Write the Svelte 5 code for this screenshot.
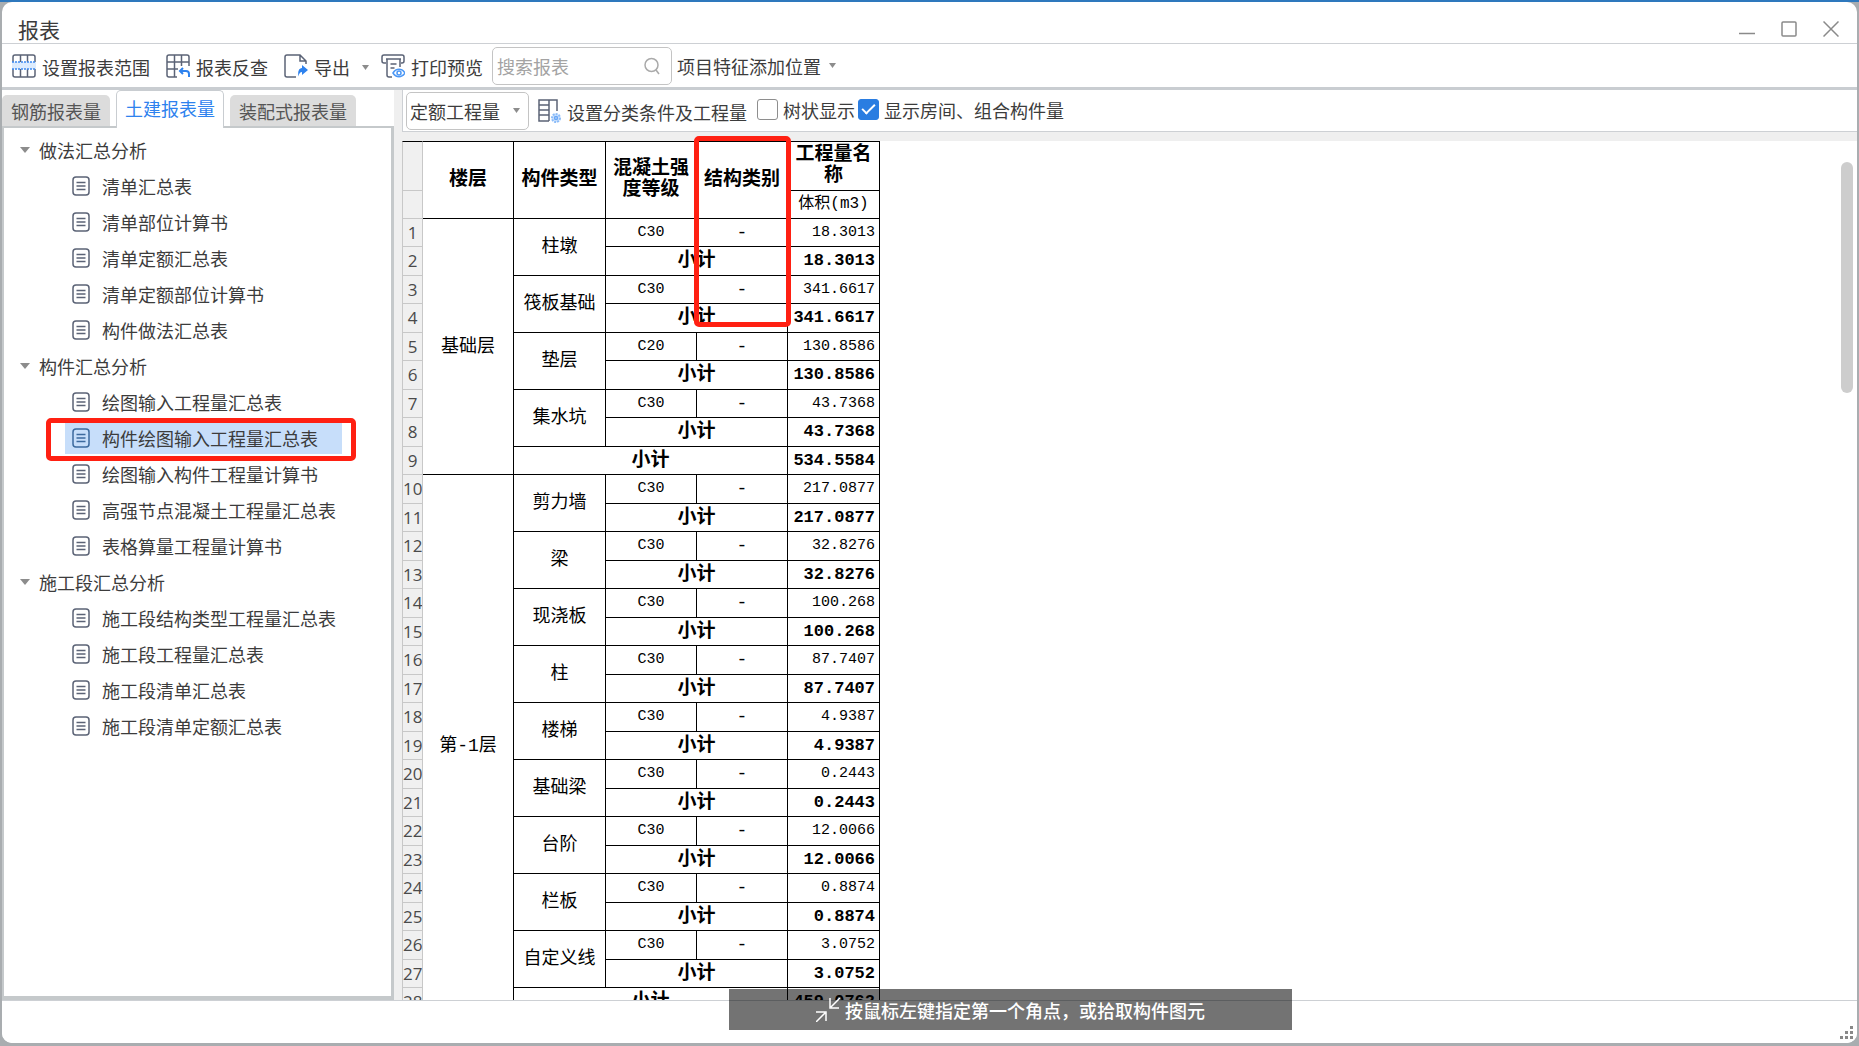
<script>
  let tabs = ["钢筋报表量", "土建报表量", "装配式报表量"];
  let activeTab = "土建报表量";
  let selected = "构件绘图输入工程量汇总表";
  let search = "";
  let treeView = false;
  let showRooms = true;

  const groups = [
    {
      name: "做法汇总分析",
      items: ["清单汇总表", "清单部位计算书", "清单定额汇总表", "清单定额部位计算书", "构件做法汇总表"],
    },
    {
      name: "构件汇总分析",
      items: [
        "绘图输入工程量汇总表",
        "构件绘图输入工程量汇总表",
        "绘图输入构件工程量计算书",
        "高强节点混凝土工程量汇总表",
        "表格算量工程量计算书",
      ],
    },
    {
      name: "施工段汇总分析",
      items: ["施工段结构类型工程量汇总表", "施工段工程量汇总表", "施工段清单汇总表", "施工段清单定额汇总表"],
    },
  ];

  const floors = [
    {
      name: "基础层",
      total: "534.5584",
      parts: [
        ["柱墩", "C30", "18.3013"],
        ["筏板基础", "C30", "341.6617"],
        ["垫层", "C20", "130.8586"],
        ["集水坑", "C30", "43.7368"],
      ],
    },
    {
      name: "第-1层",
      total: "459.0762",
      parts: [
        ["剪力墙", "C30", "217.0877"],
        ["梁", "C30", "32.8276"],
        ["现浇板", "C30", "100.268"],
        ["柱", "C30", "87.7407"],
        ["楼梯", "C30", "4.9387"],
        ["基础梁", "C30", "0.2443"],
        ["台阶", "C30", "12.0066"],
        ["栏板", "C30", "0.8874"],
        ["自定义线", "C30", "3.0752"],
      ],
    },
  ];

  // flatten floors into table rows
  let rows = [];
  for (const floor of floors) {
    floor.parts.forEach(([part, grade, volume], i) => {
      rows.push({ floor: i === 0 ? floor : null, part, grade, volume });
      rows.push({ subtotal: true, volume });
    });
    rows.push({ total: true, volume: floor.total });
  }
</script>

<div class="desktop">
  <div class="window">
    <header class="titlebar">
      <h1>报表</h1>
      <div class="window-buttons">
        <button aria-label="最小化">
          <svg width="16" height="16" viewBox="0 0 16 16"><path d="M0 12.5h16" /></svg>
        </button>
        <button aria-label="最大化">
          <svg width="16" height="16" viewBox="0 0 16 16"><rect x="1" y="1" width="14" height="14" rx="1" /></svg>
        </button>
        <button aria-label="关闭">
          <svg width="16" height="16" viewBox="0 0 16 16"><path d="M0.5 0.5l15 15M15.5 0.5l-15 15" /></svg>
        </button>
      </div>
    </header>

    <div class="toolbar">
      <button class="tool">
        <svg width="24" height="24" viewBox="0 0 24 24">
          <rect x="1" y="1" width="22" height="22" rx="2" fill="#fff" stroke="#5b6376" stroke-width="1.5" />
          <path d="M8.5 1v22M15.5 1v22" fill="none" stroke="#5b6376" stroke-width="1.5" />
          <rect x="0" y="8" width="24" height="7" fill="#dcebfd" />
          <path d="M0 8h24M0 15h24" fill="none" stroke="#3d8bf2" stroke-width="1.5" stroke-dasharray="2 1" />
        </svg>
        <span>设置报表范围</span>
      </button>
      <button class="tool">
        <svg width="24" height="24" viewBox="0 0 24 24" fill="none" stroke="#5b6376" stroke-width="1.5">
          <path d="M11 23H3a2 2 0 0 1-2-2V3a2 2 0 0 1 2-2h18a2 2 0 0 1 2 2v9M1 8h22M1 15h11M8.5 1v22M15.5 1v11" />
          <path d="M17 14l-3 3 3 3M14 17h6a3 3 0 0 1 3 3v3" stroke="#2e82ee" stroke-width="2" />
        </svg>
        <span>报表反查</span>
      </button>
      <button class="tool export">
        <svg width="24" height="24" viewBox="0 0 24 24" fill="none" stroke="#5b6376" stroke-width="1.5">
          <path d="M12 23H3a2 2 0 0 1-2-2V3a2 2 0 0 1 2-2h13l6 6v3M16 1v6h6" />
          <path d="M18 11l6 5-6 5v-3c-2 0-3 1.500-3.500 4.500-1-5 .5-8.500 3.500-8.500z" fill="#2e82ee" stroke="none" />
        </svg>
        <span>导出</span>
        <svg class="arrow" width="7" height="5" viewBox="0 0 7 5"><path d="M0 0h7L3.5 5z" /></svg>
      </button>
      <button class="tool preview">
        <svg width="24" height="24" viewBox="0 0 24 24" fill="none" stroke="#5b6376" stroke-width="1.5">
          <path d="M5 9H3a2 2 0 0 1-2-2V3a2 2 0 0 1 2-2h18a2 2 0 0 1 2 2v4a2 2 0 0 1-2 2h-1M5 5h15M6 5v16a2 2 0 0 0 2 2h3M19 5v8M9.5 10h6M9.5 14h4" />
          <path d="M12 19c3-5 9-5 12 0-3 5-9 5-12 0z" fill="#fff" stroke="#4b97f5" />
          <circle cx="18" cy="19" r="2" stroke="#4b97f5" />
        </svg>
        <span>打印预览</span>
      </button>
      <div class="search">
        <input type="text" aria-label="搜索报表" placeholder="搜索报表" bind:value={search} />
        <svg width="16" height="18" viewBox="0 0 16 18" fill="none" stroke="#aaa" stroke-width="1.5">
          <circle cx="7.5" cy="8" r="6.5" /><path d="M12 13l3 4" />
        </svg>
      </div>
      <button class="position">
        项目特征添加位置
        <svg class="arrow" width="7" height="5" viewBox="0 0 7 5"><path d="M0 0h7L3.5 5z" /></svg>
      </button>
    </div>

    <div class="body">
      <aside>
        <div class="tabs" role="tablist">
          {#each tabs as tab}
            <button role="tab" aria-selected={tab === activeTab} class:active={tab === activeTab} on:click={() => (activeTab = tab)}>{tab}</button>
          {/each}
        </div>
        <nav class="tree">
          {#each groups as group}
            <button class="group">
              <svg width="10" height="6" viewBox="0 0 10 6"><path d="M0 0h10L5 6z" fill="#8c8c8c" /></svg>
              {group.name}
            </button>
            {#each group.items as item}
              <button class="item" class:selected={item === selected} on:click={() => (selected = item)}>
                <svg width="18" height="20" viewBox="0 0 18 20" fill="none" stroke="currentColor" stroke-width="1.5">
                  <rect x="1" y="1" width="16" height="18" rx="3" /><path d="M4.5 6.5h9M4.5 10h9M4.5 13.5h9" />
                </svg>
                {item}
              </button>
            {/each}
          {/each}
        </nav>
      </aside>

      <main>
        <div class="options">
          <div class="select">
            <select aria-label="工程量类型">
              <option>定额工程量</option>
              <option>清单工程量</option>
            </select>
            <svg class="arrow" width="7" height="5" viewBox="0 0 7 5"><path d="M0 0h7L3.5 5z" /></svg>
          </div>
          <button class="tool classify">
            <svg width="24" height="24" viewBox="0 0 24 24" fill="none" stroke="#5b6376" stroke-width="1.5">
              <path d="M12 22H2V1h18v11M12 1v21M2 6h10M2 11h10M2 16h10" />
              <circle cx="19" cy="19" r="4" fill="#cfe3fc" stroke="#8bbcf9" stroke-width="2" stroke-dasharray="2 1" />
              <circle cx="19" cy="19" r="1.5" stroke="#6aa8f7" />
            </svg>
            <span>设置分类条件及工程量</span>
          </button>
          <label><input type="checkbox" bind:checked={treeView} />树状显示</label>
          <label><input type="checkbox" bind:checked={showRooms} />显示房间、组合构件量</label>
        </div>

        <div class="sheet">
          <table>
            <colgroup>
              <col class="c-num" /><col class="c-odd" /><col class="c-even" /><col class="c-odd" /><col class="c-odd" /><col class="c-even" />
            </colgroup>
            <thead>
              <tr class="head-top">
                <td class="num"></td>
                <th rowspan="2">楼层</th>
                <th rowspan="2">构件类型</th>
                <th rowspan="2">混凝土强<br />度等级</th>
                <th rowspan="2">结构类别</th>
                <th>工程量名<br />称</th>
              </tr>
              <tr>
                <td class="num"></td>
                <th class="unit">体积(m3)</th>
              </tr>
            </thead>
            <tbody>
              {#each rows as row, i}
                <tr>
                  <td class="num">{i + 1}</td>
                  {#if row.floor}
                    <td class="name" rowspan={row.floor.parts.length * 2 + 1}>{row.floor.name}</td>
                  {/if}
                  {#if row.total}
                    <td class="sum" colspan="3">小计</td>
                  {:else if row.subtotal}
                    <td class="sum" colspan="2">小计</td>
                  {:else}
                    <td class="name" rowspan="2">{row.part}</td>
                    <td>{row.grade}</td>
                    <td class="name">-</td>
                  {/if}
                  <td class="volume" class:bold={row.total || row.subtotal}>{row.volume}</td>
                </tr>
              {/each}
            </tbody>
          </table>
          <div class="column-mark"></div>
          <div class="scrollbar"></div>
        </div>
      </main>
    </div>

    <footer>
      <svg width="13" height="13" viewBox="0 0 13 13" fill="#888">
        <path d="M10 0h3v3h-3zM5 5h3v3H5zM10 5h3v3h-3zM0 10h3v3H0zM5 10h3v3H5zM10 10h3v3h-3z" />
      </svg>
    </footer>
  </div>

  <div class="hint">
    <svg width="24" height="24" viewBox="0 0 24 24" fill="none" stroke="#fff" stroke-width="1.5">
      <path d="M0 24l9-9M0 14h10v9M24 0l-9 9M14 0v10h9" />
    </svg>
    按鼠标左键指定第一个角点，或拾取构件图元
  </div>
</div>

<style>
  :global(body) {
    margin: 0;
  }

  .desktop {
    position: relative;
    box-sizing: border-box;
    height: 100vh;
    padding: 2px 2px 3px;
    overflow: hidden;
    background: linear-gradient(#2e78bd 2px, #a9adb0 2px);
    color: #3c3c3c;
    font-family: "Noto Sans CJK SC", sans-serif;
    font-size: 18px;
    line-height: 24px;
  }

  .window {
    display: flex;
    flex-direction: column;
    height: 100%;
    overflow: hidden;
    border-radius: 10px;
    background: #fff;
  }

  button,
  input,
  select {
    padding: 0;
    border: none;
    background: none;
    color: inherit;
    font: inherit;
  }

  svg {
    flex: none;
  }

  .arrow {
    fill: #8c8c8c;
  }

  .titlebar {
    display: flex;
    justify-content: space-between;
    align-items: center;
    height: 41px;
    padding: 0 18px 0 16px;
    border-bottom: 1px solid #cdd0d4;
  }

  h1 {
    margin: 12px 0 0;
    font-size: 21px;
    font-weight: normal;
  }

  .window-buttons {
    display: flex;
    gap: 26px;
    margin-top: 13px;
  }

  .window-buttons button {
    display: flex;
  }

  .window-buttons svg {
    fill: none;
    stroke: #8a8a8a;
    stroke-width: 1.5;
  }

  .toolbar {
    display: flex;
    align-items: center;
    height: 43px;
    padding-left: 10px;
    border-bottom: 3px solid #c9cdd1;
  }

  .tool {
    display: flex;
    align-items: center;
    gap: 6px;
    margin-right: 16px;
    white-space: nowrap;
  }

  .tool span {
    padding-top: 2px;
  }

  .export {
    margin-right: 12px;
  }

  .export .arrow {
    margin: 4px 0 0 6px;
  }

  .preview {
    margin-right: 9px;
  }

  .search {
    display: flex;
    align-items: center;
    box-sizing: border-box;
    width: 180px;
    height: 38px;
    padding: 0 11px 0 4px;
    border: 1px solid #c4c4c4;
    border-radius: 5px;
  }

  .search input {
    flex: 1;
    min-width: 0;
  }

  .search input::placeholder {
    color: #a3a3a3;
  }

  .position {
    display: flex;
    align-items: center;
    gap: 8px;
    margin-left: 5px;
    white-space: nowrap;
  }

  .body {
    display: flex;
    flex: 1;
    min-height: 0;
  }

  aside {
    display: flex;
    flex-direction: column;
    width: 392px;
  }

  .tabs {
    display: flex;
    align-items: flex-end;
    gap: 6px;
    height: 36px;
  }

  .tabs button {
    height: 31px;
    padding: 0 9px;
    border-radius: 5px 5px 0 0;
    background: #dcdcdc;
    color: #555;
  }

  .tabs .active {
    position: relative;
    height: 38px;
    margin-bottom: -2px;
    padding: 0 8px 3px;
    border: 1px solid #c9cdd1;
    border-bottom: none;
    background: #fff;
    color: #2e82ee;
  }

  .tree {
    display: flex;
    flex-direction: column;
    flex: 1;
    padding-top: 4px;
    border: 2px solid #c5c9cb;
    border-width: 2px 3px 4px 2px;
  }

  .group,
  .item {
    display: flex;
    align-items: center;
    height: 36px;
    text-align: left;
    white-space: nowrap;
  }

  .group {
    gap: 9px;
    padding-left: 16px;
  }

  .item {
    position: relative;
    align-self: flex-start;
    gap: 12px;
    padding: 0 13px 0 68px;
  }

  .item svg {
    color: #5b6376;
  }

  .selected {
    background: linear-gradient(#c7defa, #c7defa) 61px 3px / 277px 31px no-repeat;
    padding-right: 24px;
  }

  .selected svg {
    color: #3c6a9e;
  }

  .selected::after {
    content: "";
    position: absolute;
    inset: -2px -14px -5px 42px;
    border: 5px solid #ff2012;
    border-radius: 5px;
  }

  main {
    display: flex;
    flex: 1;
    flex-direction: column;
    min-width: 0;
    margin-left: 8px;
    background: #fff;
    box-shadow: -8px 0 #efefef;
  }

  .options {
    display: flex;
    align-items: center;
    height: 41px;
    padding-left: 3px;
    border-bottom: 1px solid #cdd0d4;
    border-left: 1px solid #cdd0d4;
  }

  .select {
    display: flex;
    align-items: center;
    box-sizing: border-box;
    width: 123px;
    height: 38px;
    margin-right: 8px;
    padding: 0 8px 0 3px;
    border: 1px solid #c4c4c4;
    border-radius: 5px;
  }

  select {
    flex: 1;
    min-width: 0;
    appearance: none;
  }

  .classify {
    margin-right: 10px;
  }

  .options label {
    display: flex;
    align-items: center;
    gap: 5px;
    margin: 0 3px 2px 0;
    white-space: nowrap;
  }

  .options input {
    box-sizing: border-box;
    width: 21px;
    height: 21px;
    margin: 0;
    border: 1px solid #8e8e8e;
    border-radius: 3px;
    appearance: none;
  }

  .options input:checked {
    display: grid;
    place-items: center;
    border-color: #2a7de1;
    background: #2a7de1;
  }

  .options input:checked::before {
    content: "";
    width: 5px;
    height: 11px;
    margin-top: -4px;
    border: solid #fff;
    border-width: 0 2px 2px 0;
    transform: rotate(45deg);
  }

  .sheet {
    position: relative;
    flex: 1;
    min-height: 0;
    border-top: 9px solid #efefef;
    overflow: clip;
    overflow-clip-margin: border-box;
  }

  table {
    width: 478px;
    table-layout: fixed;
    border-spacing: 0;
    color: #000;
    font-family: "Liberation Mono", "Noto Sans CJK SC", monospace;
    font-size: 15px;
    line-height: 20px;
  }

  .c-num {
    width: 21px;
  }

  .c-odd {
    width: 91px;
  }

  .c-even {
    width: 92px;
  }

  th,
  td {
    height: 28px;
    box-sizing: border-box;
    padding: 0;
    border-right: 1px solid #000;
    border-bottom: 1px solid #000;
    text-align: center;
    white-space: nowrap;
  }

  tbody tr:nth-child(even) td {
    height: 29px;
  }

  th {
    font-size: 19px;
    line-height: 21px;
  }

  thead tr:first-child > * {
    border-top: 1px solid #000;
  }

  .head-top .num {
    height: 50px;
  }

  thead .unit {
    font-size: 16px;
    font-weight: normal;
  }

  td.num {
    border-color: #c8c8c8;
    border-left: 1px solid #c8c8c8;
    overflow: hidden;
    background: #f0f0f0;
    color: #4a4a4a;
    font-family: "Open Sans", sans-serif;
    font-size: 17px;
  }

  .name {
    font-size: 18px;
  }

  .sum {
    font-size: 19px;
    font-weight: bold;
  }

  .volume {
    padding-right: 4px;
    text-align: right;
  }

  .bold {
    font-size: 17px;
    font-weight: bold;
  }

  .column-mark {
    position: absolute;
    top: -5px;
    left: 292px;
    box-sizing: border-box;
    width: 97px;
    height: 191px;
    border: 5px solid #ff2012;
    border-radius: 5px;
  }

  .scrollbar {
    position: absolute;
    top: 21px;
    right: 4px;
    width: 12px;
    height: 231px;
    border-radius: 6px;
    background: #cdcdcd;
  }

  footer {
    display: flex;
    justify-content: flex-end;
    align-items: flex-end;
    box-sizing: border-box;
    height: 43px;
    padding: 0 4px 4px 0;
    border-top: 1px solid #cdd0d4;
    background: #fff;
  }

  .hint {
    position: absolute;
    bottom: 16px;
    left: 729px;
    display: flex;
    justify-content: center;
    align-items: center;
    gap: 5px;
    width: 563px;
    height: 41px;
    background: rgba(0, 0, 0, 0.55);
    color: #fff;
    font-weight: 500;
  }
</style>
